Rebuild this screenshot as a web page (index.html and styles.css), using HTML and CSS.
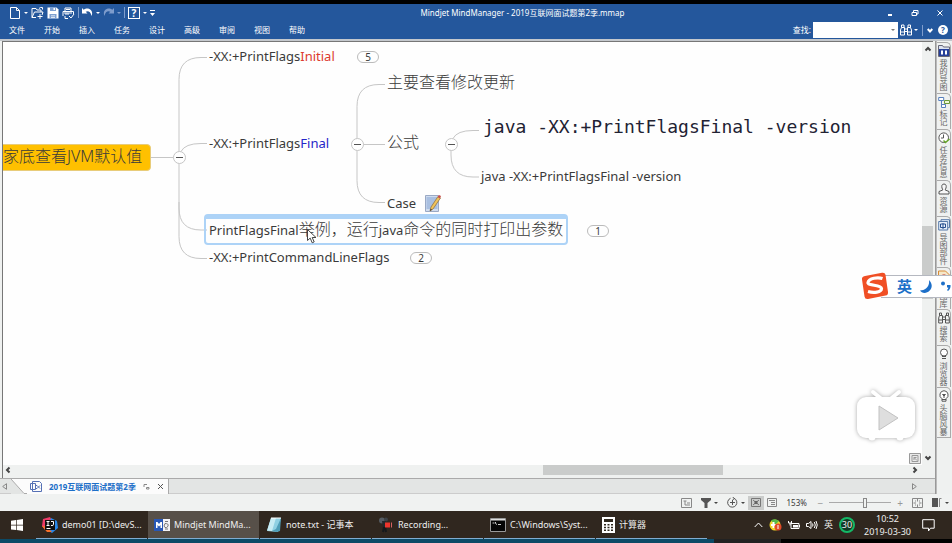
FILE: index.html
```html
<!DOCTYPE html>
<html lang="zh-CN">
<head>
<meta charset="utf-8">
<title>Mindjet MindManager - 2019互联网面试题第2季.mmap</title>
<link rel="stylesheet" href="styles.css">
</head>
<body>
<header class="header">
  <div class="titlebar">
    <div class="quick">
      <button class="ib" aria-label="新建"><svg width="12" height="12" viewBox="0 0 12 12"><path d="M1.500.5h6l3 3v8h-9zM7.500.5v3h3" class="w"/></svg></button>
      <i class="caret"></i>
      <button class="ib" aria-label="打开"><svg width="13" height="12" viewBox="0 0 13 12"><path d="M5 10.500H1V1.500h4l1 1.500h4v2M1 10.500L3.500 5H12l-1 3M8 1.500l1.500-1h2v2M6.500 9.500h5M9 7v5" class="w"/></svg></button>
      <button class="ib" aria-label="保存"><svg width="12" height="12" viewBox="0 0 12 12"><path d="M.5.5h9l2 2v9H.5z" fill="#fff"/><path d="M3 0v4h6V0M2.500 12V7h7v5" fill="#7ea0d0"/><path d="M6.500 1h1.500v2H6.500zM4 8.500h4v.8H4zM4 10h4v.8H4z" fill="#fff"/></svg></button>
      <button class="ib" aria-label="打印"><svg width="13" height="12" viewBox="0 0 13 12"><path d="M3 4V1h6v3M1 9V4.500h10.500V7M3 7h4M3 9v2.500h3M4 2.500h4M2 6h8M7 9l2 2 3-4" class="w"/></svg></button>
      <i class="sep"></i>
      <button class="ib" aria-label="撤消"><svg width="11" height="11" viewBox="0 0 11 11"><path d="M0 1v5.500h5.500L3.700 4.800C6 3.500 8.500 4.500 9.500 9c2-4.500-1-7.500-4.500-7.500-1.500 0-2.500.6-3.300 1.300z" fill="#fff"/></svg></button>
      <i class="caret"></i>
      <button class="ib" aria-label="重做"><svg width="11" height="11" viewBox="0 0 11 11"><path d="M11 1v5.500H5.500l1.800-1.700C5 3.500 2.500 4.500 1.500 9-.5 4.500 2.500 1.500 6 1.500c1.500 0 2.500.6 3.300 1.300z" fill="#7e9ccc"/></svg></button>
      <i class="caret dim"></i>
      <i class="sep"></i>
      <button class="ib help" aria-label="帮助">?</button>
      <i class="caret"></i>
      <svg width="5" height="6" viewBox="0 0 5 6"><path d="M0 0h5v1H0zM0 3h5L2.500 6z" fill="#fff"/></svg>
    </div>
    <div class="title">Mindjet MindManager - 2019互联网面试题第2季.mmap</div>
    <div class="winbtns">
      <button class="ib" aria-label="最小化"><svg width="8" height="8" viewBox="0 0 8 8"><path d="M2 6h4" class="w b"/></svg></button>
      <button class="ib" aria-label="还原"><svg width="8" height="8" viewBox="0 0 8 8"><path d="M2.500 3V1.500H7V5H5.500M1 3.500h4.500v3H1z" class="w"/></svg></button>
      <button class="ib" aria-label="关闭"><svg width="8" height="8" viewBox="0 0 8 8"><path d="M1.500 1.500l5 5M6.500 1.500l-5 5" class="w"/></svg></button>
    </div>
  </div>
  <div class="menubar">
    <nav class="menus">
      <button>文件</button><button>开始</button><button>插入</button><button>任务</button><button>设计</button><button>高级</button><button>审阅</button><button>视图</button><button>帮助</button>
    </nav>
    <div class="find">
      <label for="find">查找:</label>
      <span class="combo"><input id="find" type="text"><i class="caret grey"></i></span>
      <button class="ib" aria-label="搜索"><svg width="12" height="12" viewBox="0 0 12 12"><path d="M1.500 3.500V1h2.500v2.500M8 3.500V1h2.500v2.500M.5 11V6l1-2.500h3V11zM7.500 11V3.500h3l1 2.500v5zM4.500 5h3M4.500 7.500h3M.5 8h4M7.500 8h4" class="w"/></svg></button>
      <i class="caret"></i>
      <i class="sep short"></i>
      <button class="ib chev" aria-label="展开"><svg width="6" height="5" viewBox="0 0 6 5"><path d="M.7 1L3 3.500 5.300 1" class="w b"/></svg></button>
      <button class="round" aria-label="帮助主题">?</button>
    </div>
  </div>
</header>

<div class="workspace">
  <main class="doc">
    <div class="view">
      <section class="canvas">
        <svg class="links" width="700" height="300" viewBox="0 0 700 300">
          <path d="M148 115.500h28M204 15.500h-6q-22 0-22 22v157q0 22 22 22h6M204 101.500h-6q-16 0-20 8M176 160v6q0 22 22 22h6"/>
          <path d="M382 42.500h-6q-22 0-22 22v74q0 22 22 22h6M354 102.500h28M476 88.500h-6q-16 0-20 8M448 102v11q0 22 22 22h6"/>
          <g fill="#fff"><circle cx="176.500" cy="115.500" r="6"/><circle cx="354.500" cy="102.500" r="6"/><circle cx="448.500" cy="102.500" r="6"/></g>
          <path class="minus" d="M173 115.500h7M351 102.500h7M445 102.500h7"/>
        </svg>
        <div class="root">家底查看JVM默认值</div>
        <div class="node n1">-XX:+PrintFlags<span class="red">Initial</span></div>
        <div class="count c1">5</div>
        <div class="node n2">-XX:+PrintFlags<span class="blue">Final</span></div>
        <div class="node cn n3">主要查看修改更新</div>
        <div class="node cn n4">公式</div>
        <div class="node mono n5">java -XX:+PrintFlagsFinal -version</div>
        <div class="node n6">java -XX:+PrintFlagsFinal -version</div>
        <div class="node n7">Case
          <svg width="16" height="17" viewBox="0 0 16 17"><path d="M.5.500h13v16H.5z" fill="#cfdcef" stroke="#9aa9c4"/><path d="M1.500 2h11v12h-11z" fill="#a9bfe0"/><path d="M5 16l1-4L13 1.500l2.500 1.500L8 14z" fill="#f0c35a" stroke="#8a6a3a" stroke-width=".7"/><path d="M12.500 2L14 0l2 1-1 2.500z" fill="#c8504c"/><path d="M5 16l.7-2.300 1.300.8z" fill="#333"/></svg></div>
        <div class="node selected n8">PrintFlagsFinal<span class="cn">举例，运行</span>java<span class="cn">命令的同时打印出参数</span></div>
        <div class="count c8">1</div>
        <div class="node n9">-XX:+PrintCommandLineFlags</div>
        <div class="count c9">2</div>
        <svg class="cursor" width="10" height="15" viewBox="0 0 10 15"><path d="M.5.500v11l2.700-2.400 2 4.700 2-.9-2-4.400H9z" fill="#fff" stroke="#444"/></svg>
      </section>
      <div class="vscroll">
        <svg width="8" height="6" viewBox="0 0 8 6"><path d="M1.500 4.500L4 2l2.500 2.500" class="k"/></svg>
        <div class="vtrack"><div class="vthumb"></div></div>
        <svg width="8" height="6" viewBox="0 0 8 6"><path d="M1.500 1.500L4 4l2.500-2.500" class="k"/></svg>
      </div>
      <button class="fit" aria-label="适合地图"><svg width="12" height="11" viewBox="0 0 12 11"><path d="M.5.500h11v10H.5z" fill="#e8e8e8" stroke="#999"/><path d="M3 2.500h6v6H3zM5 7V4.500h2.500M5 4.500l3 3" fill="none" stroke="#999"/></svg></button>
    </div>
    <div class="hscroll">
      <svg width="6" height="8" viewBox="0 0 6 8"><path d="M4.500 1.500L2 4l2.500 2.500" class="k"/></svg>
      <div class="htrack"><div class="hthumb"></div></div>
      <svg width="6" height="8" viewBox="0 0 6 8"><path d="M1.500 1.500L4 4 1.500 6.500" class="k"/></svg>
    </div>
    <div class="tabs">
      <svg width="5" height="7" viewBox="0 0 5 7"><path d="M4.500.7v5.600L.7 3.500z" class="g"/></svg>
      <div class="tab">
        <svg class="slope" width="16" height="15" viewBox="0 0 16 15"><path d="M0 0h16v15H13z" fill="#fcfcfc"/><path d="M0 0l13 14.500h3" fill="none" stroke="#aaa"/></svg>
        <svg width="12" height="11" viewBox="0 0 12 11"><path d="M2.500.500h7l2 2v8h-9zM.5 2.500h5v6h-5zM2.500 4v3M6 4.500h1l1.500 1.500L10 4.500M6 7.500h1L8.500 6 10 7.500" fill="none" stroke="#5570b5"/></svg>
        <a href="#">2019互联网面试题第2季</a>
        <svg width="7" height="7" viewBox="0 0 7 7"><path d="M1 4V1.500h3M3.500 4.500h2.500v1.500H3.500z" class="g"/></svg>
        <button class="ib" aria-label="关闭标签"><svg width="7" height="7" viewBox="0 0 7 7"><path d="M1 1l5 5M6 1L1 6" fill="none" stroke="#555"/></svg></button>
      </div>
      <svg class="next" width="5" height="7" viewBox="0 0 5 7"><path d="M.5.700v5.600l3.800-2.800z" class="g"/></svg>
    </div>
  </main>
  <aside class="side">
    <button class="s4"><svg width="12" height="12" viewBox="0 0 12 12"><path d="M.5 2V.500h4l1 1.500h6v9.500H.5z" fill="#dce2ef" stroke="#667"/><path d="M1 4h10v7H1z" fill="#26409a"/><path d="M3 5.500h2v4H3zM7 5.500h2v4H7z" fill="#fff"/></svg><span>我的导图</span></button>
    <button class="s2"><svg width="12" height="12" viewBox="0 0 12 12"><path d="M.7 1.500h5v3h-5zM3.500 4.500v5h2" fill="#fff" stroke="#567fbd"/><path d="M6.500 4.500h5v3h-5z" fill="#eef7d8" stroke="#6c9a3a"/><path d="M3.500 8.500h4v3h-4z" fill="#fff" stroke="#567fbd"/></svg><span>标记</span></button>
    <button class="s4"><svg width="12" height="12" viewBox="0 0 12 12"><circle cx="5.700" cy="5.700" r="4.800" fill="#fff" stroke="#555"/><path d="M5.500 2.500v3.500H3" fill="none" stroke="#555"/><path d="M5.500 8.500l2 2L11.500 7" fill="none" stroke="#66a52b" stroke-width="1.500"/></svg><span>任务信息</span></button>
    <button class="s2"><svg width="12" height="12" viewBox="0 0 12 12"><path d="M6 1C3.800 1 3.500 3 4 5c.3 1 .8 1.500.8 2L1 8.500v2.500h10V8.500L7.200 7c0-.5.500-1 .8-2 .5-2 .2-4-2-4z" fill="#f7f7f7" stroke="#555"/></svg><span>资源</span></button>
    <button class="s4"><svg width="12" height="12" viewBox="0 0 12 12"><path d="M3 2V.700h8.500v8H10M.7 2.500h9v8.500h-9z" fill="#e6effa" stroke="#5579a8"/><path d="M2.500 5h5v3.500h-5zM5 4v6" fill="none" stroke="#26508f"/></svg><span>导图部件</span></button>
    <button class="s3"><svg width="12" height="12" viewBox="0 0 12 12"><path d="M.5 1h7l4 4v6H.5z" fill="#f5e7c8" stroke="#d78b35"/><path d="M2.500 10c0-4 2-6 5-5" fill="none" stroke="#cc4a4a"/><path d="M5 10c0-2 2-4 4-3" fill="none" stroke="#3977c4"/></svg><span class="low">图库</span></button>
    <button class="s2"><svg width="12" height="12" viewBox="0 0 12 12"><path d="M1.500 3.500V1h2v2.500M8.500 3.500V1h2v2.500M.7 11V6l.8-2.500h3V11zM7.500 11V3.500h3l.8 2.500v5zM4.500 5h3M4.500 7.500h3M.7 8h3.800M7.500 8h3.800" fill="none" stroke="#555"/></svg><span>搜索</span></button>
    <button class="s3"><svg width="12" height="12" viewBox="0 0 12 12"><circle cx="6" cy="4.500" r="3.500" fill="#fff" stroke="#555"/><path d="M4 8.500h4M4 10.500h4" stroke="#555"/></svg><span>浏览器</span></button>
    <button class="s4"><svg width="12" height="12" viewBox="0 0 12 12"><path d="M6 .7a4.300 4.300 0 00-2 8v2.500h4V8.700a4.300 4.300 0 00-2-8z" fill="#fff" stroke="#555"/><path d="M6 8V6L4.500 4.500h3L6 6M4 9.500h4" fill="none" stroke="#555"/></svg><span>头脑风暴</span></button>
  </aside>
</div>

<div class="status">
  <svg width="11" height="10" viewBox="0 0 11 10"><path d="M.5.500h10v9H.5zM2.500 3h3M4 3v4h2M6 5h3M6 7h3" class="g"/></svg>
  <span class="pair"><svg width="10" height="10" viewBox="0 0 10 10"><path d="M0 0h10v2L6.500 5v5h-3V5L0 2z" fill="#555"/></svg><i class="caret dark"></i></span>
  <span class="pair"><svg width="11" height="11" viewBox="0 0 11 11"><path d="M7 1.300a4.600 4.600 0 11-3.500 0M5.500 3v5M3 5.500h5M5.500 0L7.500 1.500l-2 1.500" fill="none" stroke="#555"/></svg><i class="caret dark"></i></span>
  <span class="views"><button class="on" aria-label="导图视图"><svg width="10" height="9" viewBox="0 0 10 9"><path d="M.5.500h9v8h-9zM2 2l6 5M8 2L2 7" fill="none" stroke="#777"/><path d="M3.500 3h3v3h-3z" fill="#666"/></svg></button><button aria-label="大纲视图"><svg width="10" height="9" viewBox="0 0 10 9"><path d="M.5.500h9v8h-9zM2 2.500h6M4 4.500h4M4 6.500h4" class="g"/></svg></button></span>
  <span class="zoomval">153%</span>
  <label class="zoom"><span>−</span><input type="range" min="0" max="100" value="58" aria-label="缩放"><span>+</span></label>
  <svg width="11" height="10" viewBox="0 0 11 10"><path d="M.5.500h10v9H.5zM5.500 1v2.500M5.500 6.500V9M1.500 5H4M7 5h2.500M3 3h1M7 7h1M7 3h1M3 7h1" class="g"/></svg>
  <span class="pair"><svg width="10" height="9" viewBox="0 0 10 9"><path d="M0 0h6v9H0z" fill="#555"/><path d="M7.500 9V.500h2" class="g"/></svg><i class="caret dark"></i></span>
</div>

<footer class="taskbar">
  <button class="start" aria-label="开始"><svg width="12" height="12" viewBox="0 0 12 12"><path d="M0 1.700L5 1v4.700H0zM5.700.900L12 0v5.700H5.700zM0 6.400h5v4.700l-5-.7zM5.700 6.400H12V12l-6.300-.9z" fill="#fff"/></svg></button>
  <div class="apps">
    <button><svg width="16" height="16" viewBox="0 0 16 16"><path d="M1 2l7-2 2 4-7 9-3-4z" fill="#ef3b67"/><path d="M9 1l6 3 1 7-6 5-5-3z" fill="#2787e8"/><path d="M0 9l5 6 5 0-6-6z" fill="#f6702b"/><path d="M3 3h10v10H3z" fill="#111"/><path d="M4.500 4.500h3M6 4.500v4M4.500 8.500h3M9 4.500h2.500v3q0 1-1.500 1H9M4.500 11.500h4" fill="none" stroke="#fff"/></svg><span>demo01 [D:\devS...</span></button>
    <button class="active"><svg width="16" height="14" viewBox="0 0 16 14"><path d="M0 1h9v12H0z" fill="#2857b5"/><path d="M9 1h7v12H9z" fill="#f3f3f5"/><path d="M2 4h1.500L5 6l1.500-2H8v6H6.500V7L5 8.500 3.500 7v3H2z" fill="#fff"/><path d="M11 3.500h3M11 5.500q4 0 3 2.500t-3 1.500 0-4M11 11h3" fill="none" stroke="#777"/></svg><span>Mindjet MindMa...</span></button>
    <button><svg width="16" height="16" viewBox="0 0 16 16"><path d="M5 1h10l-3 14-11-1z" fill="#8fd0e3"/><path d="M5 1h5L6 14l-5-.5z" fill="#c8ecf4"/><path d="M15 1l-1 13-3 1-5-1 4-2z" fill="#4e9eb8"/><path d="M5 1h10" stroke="#fff"/></svg><span>note.txt - 记事本</span></button>
    <button><svg width="16" height="16" viewBox="0 0 16 16"><circle cx="4" cy="3.500" r="3" fill="#555b62"/><circle cx="8" cy="2.500" r="2" fill="#3c4146"/><path d="M4 4h4l1 7H5z" fill="#24282c"/><path d="M6 10l-1 5M7 10l1 5" stroke="#15191c" stroke-width="2"/><path d="M7 5.500h5v5H7z" fill="#ed352d"/><path d="M13.500 5.500v5" stroke="#d96060"/></svg><span>Recording...</span></button>
    <button><svg width="16" height="14" viewBox="0 0 16 14"><path d="M.5.500h15v13H.5z" fill="#050505" stroke="#999"/><path d="M1 1h14v1.500H1z" fill="#ddd"/><path d="M2.500 5h2M5.500 4v1.500l1.500 1M8 6.500h3" fill="none" stroke="#ccc"/></svg><span>C:\Windows\Syst...</span></button>
    <button><svg width="13" height="16" viewBox="0 0 13 16"><path d="M0 0h13v16H0z" fill="#fff"/><path d="M2 2h9v3H2zM2 7h2v1.500H2zM5.500 7h2v1.500h-2zM9 7h2v1.500H9zM2 9.700h2v1.500H2zM5.500 9.700h2v1.500h-2zM9 9.700h2v1.500H9zM2 12.500h2V14H2zM5.500 12.500h2V14h-2zM9 12.500h2V14H9z" fill="#30291f"/></svg><span>计算器</span></button>
  </div>
  <div class="tray">
    <svg width="9" height="6" viewBox="0 0 9 6"><path d="M.7 5L4.500 1l3.800 4" class="w"/></svg>
    <svg width="13" height="12" viewBox="0 0 13 12"><circle cx="6" cy="6" r="5.500" fill="#f1d728"/><path d="M2 1.500Q6-1 10 2L6 6z" fill="#58b947"/><path d="M4.500 3v6M2 6h6" stroke="#fff" stroke-width="2"/><circle cx="9" cy="8" r="3.500" fill="#e34a27"/><path d="M9 6v4" stroke="#fff"/></svg>
    <svg width="12" height="10" viewBox="0 0 12 10"><path d="M3 3.500h8v5H3zM11.500 5v2M.5 1v2h3V1M2 3v2.500" class="w"/><path d="M5 5h5v2.500H5z" fill="#fff"/></svg>
    <svg width="12" height="10" viewBox="0 0 12 10"><path d="M.5 3.500h2l2.500-2v7l-2.500-2h-2zM6.500 3.500q1 1.500 0 3M8.300 2q2 3 0 6M10 1q2.500 4 0 8" class="w"/></svg>
    <span>英</span>
    <span class="badge">30</span>
    <time>10:52<br>2019-03-30</time>
    <svg width="13" height="13" viewBox="0 0 13 13"><path d="M.7.700h11.500v8.500H8.500L6.500 12v-2.800H.7z" class="w"/></svg>
  </div>
</footer>
<div class="progress"><div class="played"></div><div class="loaded"></div></div>

<div class="ime">
  <svg width="28" height="28" viewBox="0 0 28 28"><path d="M4 4L21 .8q3-.5 3.500 2L27 20q.4 3-2.500 3.600L7 27q-3 .5-3.500-2.500L1 7.500Q.5 4.700 4 4z" fill="#f04f25"/><path d="M21.500 6.500C17 5 8 6 7 10.500 6.500 14 20 12.500 20.500 16.500c0 4-8 4.500-13.500 3" fill="none" stroke="#fff" stroke-width="3.200"/></svg>
  <span>英</span>
  <svg width="13" height="13" viewBox="0 0 13 13"><path d="M9 0c6 6 1 13-4.500 13C2.500 13 1 12 0 10.500 5 10.500 10 7 9 0z" fill="#1d6fc8"/></svg>
  <svg width="10" height="12" viewBox="0 0 10 12"><circle cx="2" cy="3.500" r="2" fill="#1d6fc8"/><path d="M6 5h3.500q.5 3.500-2.500 6L6 10q1.500-1.500 1.300-2.500H6z" fill="#1d6fc8"/></svg>
</div>
<svg class="tv" width="64" height="60" viewBox="0 0 64 60"><path d="M19 5l11 9M45 5L34 14" stroke="#fff" stroke-width="4" stroke-linecap="round"/><rect x="3" y="10" width="58" height="41" rx="9" fill="#fff"/><circle cx="18" cy="50" r="3.500" fill="#fff"/><circle cx="46" cy="50" r="3.500" fill="#fff"/><path d="M25 19l19 12-19 12z" fill="#dedede" stroke="#c2c2c2" stroke-linejoin="round"/></svg>
</body>
</html>
```
FILE: styles.css
```css
* { box-sizing: border-box; }
body {
  margin: 0; height: 100vh; display: flex; flex-direction: column; overflow: hidden; position: relative;
  background: #eff1f0; color: #3a3a3a;
  font: 8px/12px "Noto Sans", "Noto Sans CJK SC", sans-serif;
}
button { margin: 0; padding: 0; border: 0; background: none; color: inherit; font: inherit; }
svg { display: block; flex: none; }
.w { fill: none; stroke: #fff; }
.b { stroke-width: 2; }
.k { fill: none; stroke: #444; stroke-width: 2; }
.g { fill: none; stroke: #888; }
.caret { flex: none; border: 2px solid transparent; border-top-color: #fff; border-bottom: 0; }
.caret.dim { border-top-color: #7e9ccc; }
.caret.grey { border-top-color: #777; }
.caret.dark { border-top-color: #444; }
.sep { width: 1px; height: 11px; background: #7e9ccc; }

.header { border-top: 4px solid #000; background: #24579c; color: #fff; flex: none; }
.titlebar { display: grid; grid-template-columns: 1fr auto 1fr; align-items: center; height: 17px; padding-left: 9px; }
.quick { display: flex; align-items: center; gap: 3px; }
.help { width: 12px; height: 12px; border: 1px solid #fff; font-weight: 700; font-size: 10px; line-height: 10px; }
.title { padding-left: 84px; }
.winbtns { display: flex; justify-content: flex-end; gap: 17px; padding-right: 8px; }
.menubar { display: flex; justify-content: space-between; align-items: center; height: 18px; }
.menus { display: flex; gap: 19px; padding-left: 9px; }
.menus button { width: 16px; white-space: nowrap; line-height: 18px; }
.find { display: flex; align-items: center; gap: 2px; padding-right: 4px; }
.combo { display: flex; align-items: center; width: 85px; height: 16px; background: #fff; padding-right: 3px; }
.combo input { flex: 1; min-width: 0; border: 0; outline: 0; background: none; height: 14px; padding: 0 2px; font: inherit; }
.short { margin-left: 2px; }
.chev { margin-left: 2px; }
.round { width: 10px; height: 10px; border-radius: 50%; background: #fff; color: #24579c; font-weight: 700; line-height: 10px; margin-left: 3px; }

.workspace { flex: 1; min-height: 0; display: flex; border-top: 2px solid #c4c8cd; }
.doc { flex: 1; min-width: 0; display: flex; flex-direction: column; border-right: 1px solid #999; }
.view { flex: 1; min-height: 0; display: flex; position: relative; margin: 0 2px; border-top: 1px solid #777; border-left: 1px solid #777; }
.canvas { flex: 1; position: relative; overflow: hidden; background: #fefefe; font-size: 13px; line-height: 20px; }
.vscroll { width: 11px; display: flex; flex-direction: column; align-items: center; padding: 4px 0; }
.vtrack { flex: 1; width: 100%; display: flex; flex-direction: column; justify-content: center; }
.vthumb { height: 18%; margin-top: 18px; background: #cacccb; }
.fit { position: absolute; right: 12px; bottom: 1px; }
.hscroll { display: flex; align-items: center; height: 13px; padding: 0 17px 3px 2px; margin-left: 2px; border-left: 1px solid #777; }
.htrack { flex: 1; height: 100%; }
.hthumb { width: 20%; height: 100%; margin-left: 59%; background: #cacccb; }
.tabs { display: flex; align-items: center; height: 16px; padding: 0 18px 0 2px; border-top: 1px solid #aaa; border-bottom: 1px solid #ccc; background: #e3e5e4; }
.tab { align-self: flex-start; display: flex; align-items: center; gap: 7px; height: 15px; margin-left: 4px; padding-right: 4px; background: #fcfcfc; border-right: 1px solid #aaa; }
.tab a { color: #1d6fc8; font-weight: 700; text-decoration: none; }
.tab .slope { margin-right: -4px; background: #e3e5e4; }
.next { margin-left: auto; }

.side { width: 16px; flex: none; padding: 1px 3px 0 0; border-left: 1px solid #bbb; }
.side button { display: flex; flex-direction: column; align-items: center; gap: 2px; width: 14px; padding-top: 2px; border: 1px solid #aaa; border-left: 0; border-bottom: 0; border-top-right-radius: 5px; color: #666; }
.side button:last-child { border-bottom: 1px solid #aaa; }
.side span { width: 8px; line-height: 8px; word-break: break-all; }
.side .low { padding-top: 8px; }
.s4 { height: 51px; }
.s2 { height: 36px; }
.s3 { height: 42px; }

.node, .count, .root, .links, .cursor { position: absolute; white-space: nowrap; }
.links { left: 0; top: 0; fill: none; stroke: #c6c6c6; }
.links .minus { stroke: #555; }
.root { left: -4px; top: 102px; height: 27px; padding: 0 8px 0 3px; border: 1px solid #e8cc7a; border-radius: 4px; background: #ffc000; line-height: 22px; font-size: 16px; font-weight: 300; }
.cn { font-size: 16px; font-weight: 300; }
.red { color: #dc3a2e; }
.blue { color: #2525c8; }
.n1 { left: 206px; top: 4px; }
.n2 { left: 206px; top: 91px; }
.n3 { left: 384px; top: 30px; }
.n4 { left: 384px; top: 90px; }
.mono { font: 18px/24px "DejaVu Sans Mono", monospace; color: #223; }
.n5 { left: 480px; top: 73px; }
.n6 { left: 478px; top: 124px; }
.n7 { left: 384px; top: 151px; display: flex; align-items: center; gap: 9px; }
.selected { padding: 0 3px; height: 31px; border: 2px solid #add3f7; border-top-width: 5px; border-radius: 4px; line-height: 20px; }
.n8 { left: 201px; top: 172px; }
.n9 { left: 206px; top: 205px; }
.count { width: 22px; height: 12px; border: 1px solid #bbb; border-radius: 6px; text-align: center; font-size: 10px; line-height: 10px; }
.c1 { left: 354px; top: 9px; }
.c8 { left: 584px; top: 183px; }
.c9 { left: 407px; top: 210px; }
.cursor { left: 304px; top: 187px; }

.status { flex: none; height: 17px; display: flex; align-items: center; justify-content: flex-end; gap: 9px; padding-right: 3px; background: #f0f2f1; }
.pair { display: flex; align-items: center; gap: 3px; }
.views { display: flex; margin: 0 -6px 0 -6px; }
.views button { width: 16px; height: 14px; display: flex; align-items: center; justify-content: center; }
.views .on { background: #cacccb; }
.zoomval { width: 20px; margin: 0 2px 0 4px; white-space: nowrap; }
.zoom { display: flex; align-items: center; gap: 6px; color: #999; font-size: 10px; }
.zoom input { width: 62px; height: 12px; margin: 0; appearance: none; background: linear-gradient(#aaa, #aaa) center / 100% 1px no-repeat; }
.zoom input::-webkit-slider-thumb { appearance: none; width: 4px; height: 10px; border: 1px solid #888; background: #f0f2f1; }

.taskbar { flex: none; height: 28px; display: flex; background: #30271f; color: #eee; font-size: 9px; }
.start { width: 33px; display: flex; align-items: center; justify-content: center; }
.apps { display: flex; gap: 1px; padding-left: 3px; }
.apps button { width: 111px; display: flex; align-items: center; gap: 4px; padding: 0 1px 0 6px; border-bottom: 1px solid #80acd0; overflow: hidden; white-space: nowrap; }
.apps .active { background: #575049; }
.tray { margin-left: auto; display: flex; align-items: center; gap: 6px; padding-right: 17px; }
.badge { width: 16px; height: 16px; border: 2px solid #14b866; border-radius: 50%; background: #123826; line-height: 12px; text-align: center; }
.tray time { text-align: center; margin: 0 5px 0 3px; line-height: 13px; }
.progress { flex: none; height: 4px; display: flex; background: #000; }
.played { width: 75%; background: #0c4a66; }
.loaded { width: 7%; background: #222; }

.ime { position: absolute; right: 0; top: 272px; display: flex; align-items: center; gap: 8px; padding-right: 1px; font-size: 15px; font-weight: 700; color: #1d6fc8; }
.ime::before { content: ""; position: absolute; z-index: -1; left: 20px; right: 0; top: 3px; bottom: 2px; background: #fff; border: solid #b5b8c0; border-width: 1px 0; }
.ime { z-index: 1; }
.tv { position: absolute; right: 34px; top: 387px; filter: drop-shadow(0 0 2px #aaa); }
```
